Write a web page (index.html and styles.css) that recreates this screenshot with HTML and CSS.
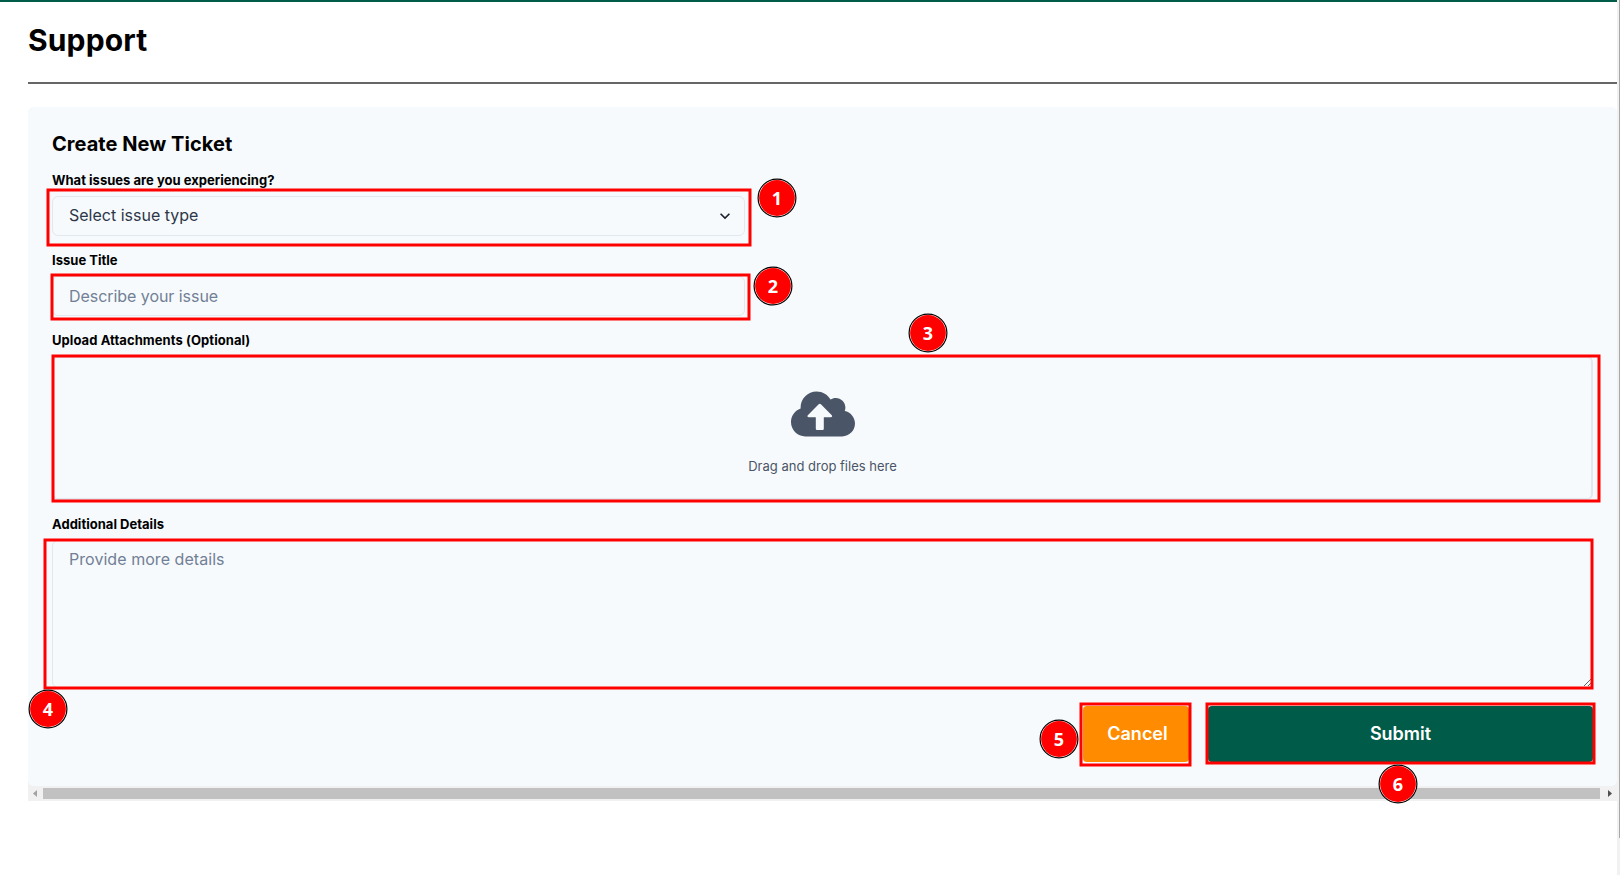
FILE: index.html
```html
<!DOCTYPE html>
<html lang="en">
<head>
<meta charset="utf-8">
<title>Support</title>
<link rel="stylesheet" href="styles.css">
</head>
<body>
<div class="app">
  <main class="page">
    <h1 class="page-title">Support</h1>
    <div class="scroller">
      <form class="card">
        <h2 class="card-title">Create New Ticket</h2>
        <label class="label">What issues are you experiencing?</label>
        <div class="field select">
          <span class="select-text">Select issue type</span>
          <svg class="chevron" viewBox="0 0 24 24"><path fill="currentColor" d="M16.59 8.59L12 13.17 7.41 8.59 6 10l6 6 6-6z"/></svg>
        </div>
        <label class="label">Issue Title</label>
        <input class="field title-field" type="text" placeholder="Describe your issue">
        <label class="label upload-label">Upload Attachments (Optional)</label>
        <div class="dropzone">
          <svg class="cloud" viewBox="0 0 640 512"><path fill="currentColor" d="M144 480C64.500 480 0 415.500 0 336c0-62.800 40.200-116.200 96.200-135.900-.1-2.700-.2-5.400-.2-8.100 0-88.400 71.600-160 160-160 59.300 0 111 32.200 138.700 80.200C409.900 102 428.300 96 448 96c53 0 96 43 96 96 0 12.200-2.300 23.800-6.400 34.600C596 238.400 640 290.100 640 352c0 70.700-57.300 128-128 128z"/><path fill="#f7fafc" d="M168 268c-8 9-3 20 10 20h70v112c0 10 6 16 16 16h48c10 0 16-6 16-16V288h70c13 0 18-11 10-20L299 158c-7-7-15-7-22 0z"/></svg>
          <p class="drop-text">Drag and drop files here</p>
        </div>
        <label class="label">Additional Details</label>
        <textarea class="details" placeholder="Provide more details"></textarea>
        <div class="actions">
          <button type="button" class="button cancel">Cancel</button>
          <button type="button" class="button submit">Submit</button>
        </div>
      </form>
      <div class="hbar">
        <svg class="arrow" viewBox="0 0 15 15"><path fill="#a3a3a3" d="M9 4v7L5 7.500z"/></svg>
        <div class="hthumb"></div>
        <svg class="arrow" viewBox="0 0 15 15"><path fill="#505050" d="M6 4v7l4-3.500z"/></svg>
      </div>
    </div>
  </main>
  <div class="vbar"><div class="vthumb"></div></div>
</div>
<svg class="marks" viewBox="0 0 1620 875">
  <g class="frames">
    <rect x="48" y="190" width="702" height="55"/>
    <rect x="52" y="275" width="697" height="44"/>
    <rect x="53" y="356" width="1546" height="145"/>
    <rect x="45" y="540" width="1547" height="148"/>
    <rect x="1081" y="704" width="109" height="61"/>
    <rect x="1207" y="704" width="387" height="59"/>
  </g>
  <g class="pins">
    <g transform="translate(777 198)"><circle class="rim" r="19.500"/><circle class="ring" r="18.900"/><circle class="dot" r="17.900"/><text y="6.500">1</text></g>
    <g transform="translate(773 286)"><circle class="rim" r="19.500"/><circle class="ring" r="18.900"/><circle class="dot" r="17.900"/><text y="6.500">2</text></g>
    <g transform="translate(928 333)"><circle class="rim" r="19.500"/><circle class="ring" r="18.900"/><circle class="dot" r="17.900"/><text y="6.500">3</text></g>
    <g transform="translate(48 709)"><circle class="rim" r="19.500"/><circle class="ring" r="18.900"/><circle class="dot" r="17.900"/><text y="6.500">4</text></g>
    <g transform="translate(1059 739)"><circle class="rim" r="19.500"/><circle class="ring" r="18.900"/><circle class="dot" r="17.900"/><text y="6.500">5</text></g>
    <g transform="translate(1398 784)"><circle class="rim" r="19.500"/><circle class="ring" r="18.900"/><circle class="dot" r="17.900"/><text y="6.500">6</text></g>
  </g>
</svg>
</body>
</html>
```
FILE: styles.css
```css
* { box-sizing: border-box; margin: 0; }
body { font-family: Inter, "Liberation Sans", sans-serif; background: #fff; color: #000; overflow: hidden; }
.app { display: flex; height: 875px; }
.page { flex: 1; min-width: 0; border-top: 2px solid #005c49; padding-left: 28px; }
.page-title { height: 82px; padding-top: 20px; border-bottom: 2px solid #666; font-size: 30px; line-height: 36px; font-weight: 700; letter-spacing: 0.15px; }
.scroller { margin-top: 23px; background: #f1f1f1; border-radius: 6px 6px 0 0; }
.card { height: 679px; padding: 25px 24px 24px; border-radius: 6px; background: #f7fafc; display: flex; flex-direction: column; }
.card-title { font-size: 20px; line-height: 24px; font-weight: 700; margin-bottom: 14px; letter-spacing: 0.05px; }
.label { font-size: 13px; line-height: 20px; font-weight: 700; margin-bottom: 6px; letter-spacing: 0.02px; }
.upload-label { letter-spacing: 0.07px; }
.field { width: 693px; height: 40px; flex: none; padding: 0 16px; margin-bottom: 14px; border: 1px solid #e2e8f0; border-radius: 6px; background: transparent; font: 400 16px/24px Inter, sans-serif; }
.title-field { letter-spacing: -0.05px; }
.select { display: flex; align-items: center; justify-content: space-between; padding-right: 9px; color: #2d3748; }
.select-text { padding-bottom: 2px; }
.chevron { width: 20px; height: 20px; color: #1a202c; }
.field::placeholder, .details::placeholder { color: #718096; opacity: 1; }
.dropzone { width: 1541px; height: 144px; flex: none; margin-bottom: 14px; border: 2px solid #e2e8f0; border-radius: 6px; display: flex; flex-direction: column; align-items: center; padding-top: 24px; color: #4a5568; }
.cloud { width: 64px; height: 64px; }
.drop-text { font-size: 13px; line-height: 20px; margin-top: 10px; }
.details { width: 1541px; height: 148px; flex: none; padding: 7px 16px; border: 1px solid #e2e8f0; border-radius: 6px; background: transparent; font: 400 16px/22px Inter, sans-serif; letter-spacing: 0.05px; resize: vertical; }
.actions { display: flex; justify-content: flex-end; gap: 19px; margin-top: 18px; }
.button { height: 56px; border: 0; border-radius: 4px; padding: 0 0 2px; color: #fff; font: 600 18px/27px Inter, sans-serif; }
.cancel { width: 106px; padding-left: 3px; background: #ff8c00; }
.submit { width: 385px; background: #005c49; }
.hbar { height: 15px; display: flex; align-items: center; background: #f1f1f1; }
.arrow { width: 15px; height: 15px; flex: none; }
.hthumb { width: 1557px; height: 11px; background: #c1c1c1; margin-right: 2px; }
.vbar { width: 3px; background: #f1f1f1; padding-left: 2px; }
.vthumb { height: 838px; background: #a8a8a8; }
.marks { position: absolute; left: 0; top: 0; width: 1620px; height: 875px; pointer-events: none; }
.frames { fill: none; stroke: #f00; stroke-width: 3px; }
.rim { fill: #fff; }
.ring { fill: #fff; stroke: #000; stroke-width: 1.2px; }
.dot { fill: #f00; }
.pins text { fill: #fff; font: 700 18px "Noto Sans", sans-serif; text-anchor: middle; }
```
